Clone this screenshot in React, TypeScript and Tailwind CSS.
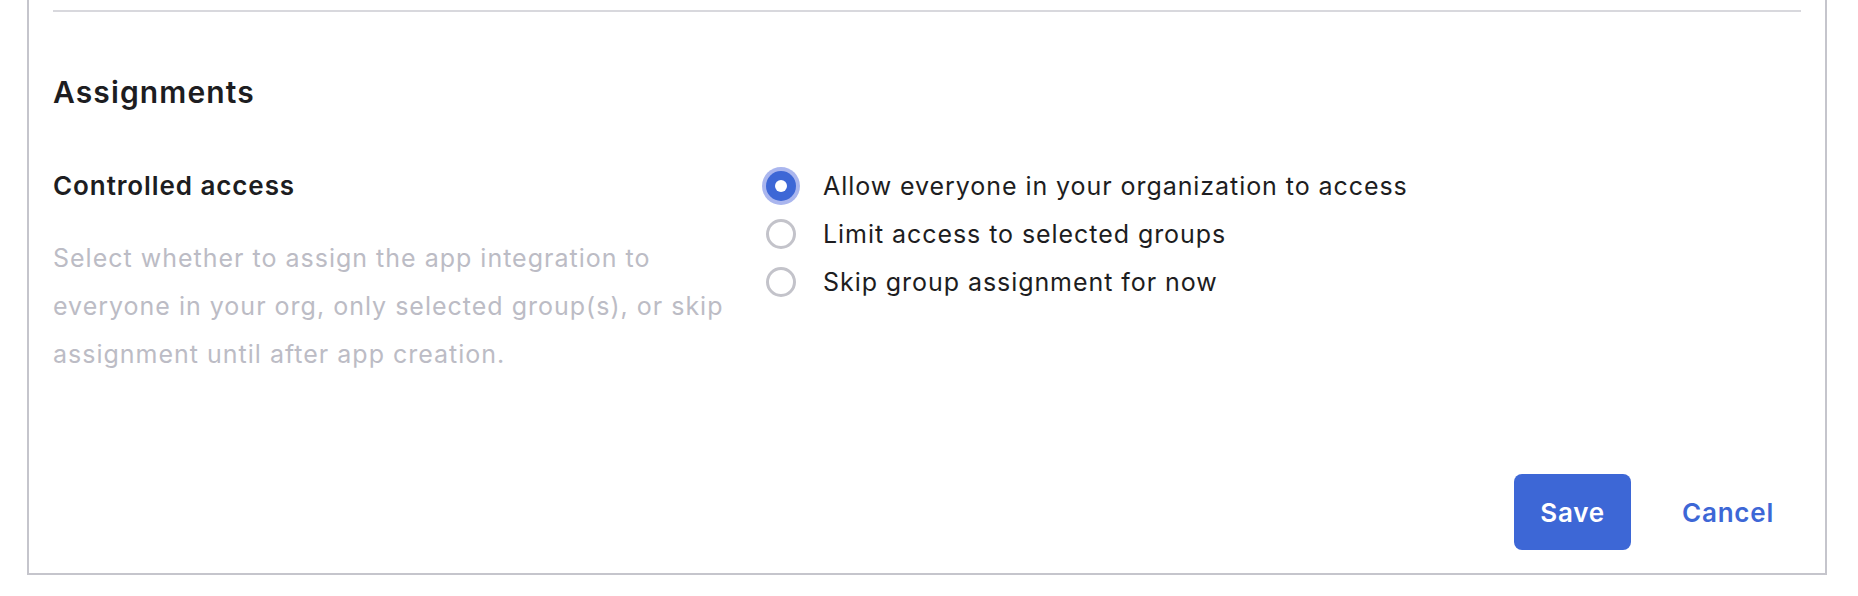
import { useState } from "react";

const OPTIONS = [
  { id: "everyone", label: "Allow everyone in your organization to access" },
  { id: "groups", label: "Limit access to selected groups" },
  { id: "skip", label: "Skip group assignment for now" },
];

function Radio({ checked }: { checked: boolean }) {
  if (checked) {
    return (
      <span className="flex h-[30px] w-[30px] shrink-0 items-center justify-center rounded-full bg-[#3d67d6] ring-4 ring-[#aab6ee]">
        <span className="h-[12px] w-[12px] rounded-full bg-white" />
      </span>
    );
  }
  return <span className="h-[30px] w-[30px] shrink-0 rounded-full border-[3px] border-[#c3c3ca] bg-white" />;
}

export default function App() {
  const [access, setAccess] = useState("everyone");

  return (
    <div className="min-h-screen bg-white font-['Inter',sans-serif] text-[#1d1d21]">
      <div className="ml-[27px] w-[1800px] border-x-2 border-b-2 border-[#c5c5cc] px-[24px] pt-[10px] pb-[23px]">
        <div className="h-[2px] bg-[#d8d8dd]" />

        <h2 className="mt-[60px] text-[30px] leading-[40px] font-semibold tracking-[0.0375em]">Assignments</h2>

        <div className="mt-[50px] flex">
          {/* left: label and help text */}
          <div className="w-[713px] shrink-0">
            <h3 className="text-[26px] leading-[48px] font-semibold tracking-[0.035em]">Controlled access</h3>
            <p className="mt-[24px] w-[690px] text-[25px] leading-[48px] tracking-[0.04em] text-[#bcbcc5]">
              Select whether to assign the app integration to everyone in your org, only selected group(s), or skip
              assignment until after app creation.
            </p>
          </div>

          {/* right: radio options */}
          <div className="flex flex-col">
            {OPTIONS.map((opt) => (
              <label
                key={opt.id}
                className="flex h-[48px] cursor-pointer items-center gap-[27px] text-[25px] leading-[48px] tracking-[0.0375em]"
                onClick={() => setAccess(opt.id)}
              >
                <Radio checked={access === opt.id} />
                <span>{opt.label}</span>
              </label>
            ))}
          </div>
        </div>

        <div className="mt-[96px] flex justify-end gap-[24px]">
          <button className="h-[76px] rounded-[8px] bg-[#3d67d6] px-[26px] text-[26px] font-semibold tracking-[0.03em] text-white">
            Save
          </button>
          <button className="h-[76px] rounded-[8px] px-[27px] text-[26px] font-semibold tracking-[0.03em] text-[#3d67d6]">
            Cancel
          </button>
        </div>
      </div>
    </div>
  );
}
